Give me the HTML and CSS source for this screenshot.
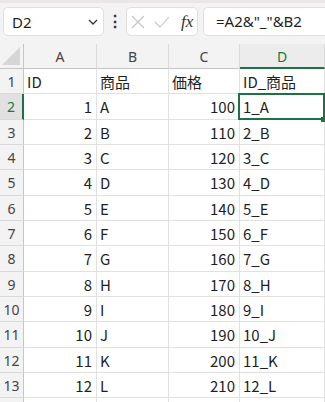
FILE: index.html
```html
<!DOCTYPE html>
<html lang="ja">
<head>
<meta charset="utf-8">
<link rel="stylesheet" href="styles.css">
</head>
<body>
<div class="topbar">
  <div class="namebox"><span class="name">D2</span>
    <svg class="chev" width="10" height="6" viewBox="0 0 10 6"><path d="M1 1 L5 5 L9 1" fill="none" stroke="#333" stroke-width="1.3"/></svg>
  </div>
  <div class="dots">⋮</div>
  <div class="fxbox">
    <svg width="14" height="14" viewBox="0 0 14 14"><path d="M1 1 L13 13 M13 1 L1 13" stroke="#c4c4c4" stroke-width="1.1" fill="none"/></svg>
    <svg width="16" height="12" viewBox="0 0 16 12"><path d="M1 6 L6 11 L15 1" stroke="#c4c4c4" stroke-width="1.1" fill="none"/></svg>
    <span class="fx">fx</span>
  </div>
  <div class="formula">=A2&amp;"_"&amp;B2</div>
</div>
<div class="sheet">
  <div class="corner"><svg width="18" height="18" viewBox="0 0 18 18"><polygon points="18,0 18,18 0,18" fill="#d6d6d6"/></svg></div>
  <div class="ch">A</div><div class="ch">B</div><div class="ch">C</div><div class="ch sel">D</div><div class="ch last"></div>

  <div class="rh">1</div><div class="c">ID</div><div class="c">商品</div><div class="c">価格</div><div class="c">ID_商品</div><div class="c last"></div>
  <div class="rh sel">2</div><div class="c n">1</div><div class="c">A</div><div class="c n">100</div><div class="c active">1_A</div><div class="c last"></div>
  <div class="rh">3</div><div class="c n">2</div><div class="c">B</div><div class="c n">110</div><div class="c">2_B</div><div class="c last"></div>
  <div class="rh">4</div><div class="c n">3</div><div class="c">C</div><div class="c n">120</div><div class="c">3_C</div><div class="c last"></div>
  <div class="rh">5</div><div class="c n">4</div><div class="c">D</div><div class="c n">130</div><div class="c">4_D</div><div class="c last"></div>
  <div class="rh">6</div><div class="c n">5</div><div class="c">E</div><div class="c n">140</div><div class="c">5_E</div><div class="c last"></div>
  <div class="rh">7</div><div class="c n">6</div><div class="c">F</div><div class="c n">150</div><div class="c">6_F</div><div class="c last"></div>
  <div class="rh">8</div><div class="c n">7</div><div class="c">G</div><div class="c n">160</div><div class="c">7_G</div><div class="c last"></div>
  <div class="rh">9</div><div class="c n">8</div><div class="c">H</div><div class="c n">170</div><div class="c">8_H</div><div class="c last"></div>
  <div class="rh">10</div><div class="c n">9</div><div class="c">I</div><div class="c n">180</div><div class="c">9_I</div><div class="c last"></div>
  <div class="rh">11</div><div class="c n">10</div><div class="c">J</div><div class="c n">190</div><div class="c">10_J</div><div class="c last"></div>
  <div class="rh">12</div><div class="c n">11</div><div class="c">K</div><div class="c n">200</div><div class="c">11_K</div><div class="c last"></div>
  <div class="rh">13</div><div class="c n">12</div><div class="c">L</div><div class="c n">210</div><div class="c">12_L</div><div class="c last"></div>
  <div class="rh"></div><div class="c"></div><div class="c"></div><div class="c"></div><div class="c"></div><div class="c last"></div>
</div>
</body>
</html>
```
FILE: styles.css
```css
html, body {
  margin: 0;
  padding: 0;
  width: 325px;
  height: 402px;
  overflow: hidden;
  background: #ffffff;
}
body {
  font-family: "Noto Sans", "Noto Sans CJK JP", sans-serif;
}
.topbar {
  height: 44px;
  box-sizing: border-box;
  background: #f3f3f3;
  border-top: 3px solid #ebe6e6;
  display: flex;
  align-items: flex-start;
  padding: 4px 0 0 3px;
  overflow: hidden;
}
.namebox {
  width: 101px;
  height: 29px;
  box-sizing: border-box;
  background: #fff;
  border: 1px solid #e0e0e0;
  border-radius: 5px;
  display: flex;
  align-items: center;
  justify-content: space-between;
  padding: 0 5px 0 8px;
  font-size: 15px;
  color: #1f1f1f;
}
.dots {
  width: 22px;
  text-align: center;
  font-size: 16px;
  line-height: 29px;
  color: #333;
  font-weight: bold;
}
.fxbox {
  width: 72px;
  height: 29px;
  box-sizing: border-box;
  background: #fff;
  border: 1px solid #e0e0e0;
  border-radius: 5px;
  display: flex;
  align-items: center;
  gap: 9px;
  padding-left: 4px;
}
.fx {
  font-family: "Liberation Serif", serif;
  font-style: italic;
  font-size: 17px;
  color: #333;
  margin-left: 2px;
}
.formula {
  flex: 1;
  margin-left: 5px;
  margin-right: -10px;
  height: 29px;
  box-sizing: border-box;
  background: #fff;
  border: 1px solid #e0e0e0;
  border-radius: 5px;
  padding-left: 12px;
  font-size: 15px;
  line-height: 27px;
  color: #1f1f1f;
  white-space: nowrap;
}
.sheet {
  display: grid;
  grid-template-columns: 24px 73px 72px 71px 85px 1fr;
  grid-template-rows: 25px repeat(13, 25.33px) 20px;
}
.corner {
  background: #f3f3f3;
  border-right: 1px solid #c6c6c6;
  border-bottom: 1px solid #c6c6c6;
  display: flex;
  align-items: flex-end;
  justify-content: flex-end;
  padding: 0 3px 3px 0;
}
.ch {
  background: #f3f3f3;
  border-right: 1px solid #dadada;
  border-bottom: 1px solid #c6c6c6;
  text-align: center;
  font-size: 14px;
  line-height: 26px;
  color: #444;
}
.ch.sel {
  color: #107c41;
  background: #ececec;
  border-bottom: 2px solid #1e7145;
}
.ch.last, .c.last {
  border-right: none;
}
.rh {
  background: #f3f3f3;
  border-right: 1px solid #c6c6c6;
  border-bottom: 1px solid #dadada;
  text-align: center;
  font-size: 14px;
  line-height: 25px;
  color: #444;
}
.rh.sel {
  background: #e1e1e1;
  color: #107c41;
  border-right: 2px solid #1e7145;
}
.c {
  border-right: 1px solid #e1e1e1;
  border-bottom: 1px solid #e1e1e1;
  font-family: "Noto Sans CJK JP", sans-serif;
  font-size: 15px;
  line-height: 25px;
  padding: 0 3px;
  color: #1f1f1f;
  white-space: nowrap;
  overflow: visible;
}
.c.n {
  text-align: right;
  padding-right: 4px;
}
.c.active {
  position: relative;
}
.c.active::before {
  content: "";
  position: absolute;
  left: -2px;
  top: -1px;
  right: -1px;
  bottom: -1px;
  border: 2px solid #1e7145;
}
.c.active::after {
  content: "";
  position: absolute;
  right: -3px;
  bottom: -3px;
  width: 6px;
  height: 5px;
  background: #1e7145;
}
```
